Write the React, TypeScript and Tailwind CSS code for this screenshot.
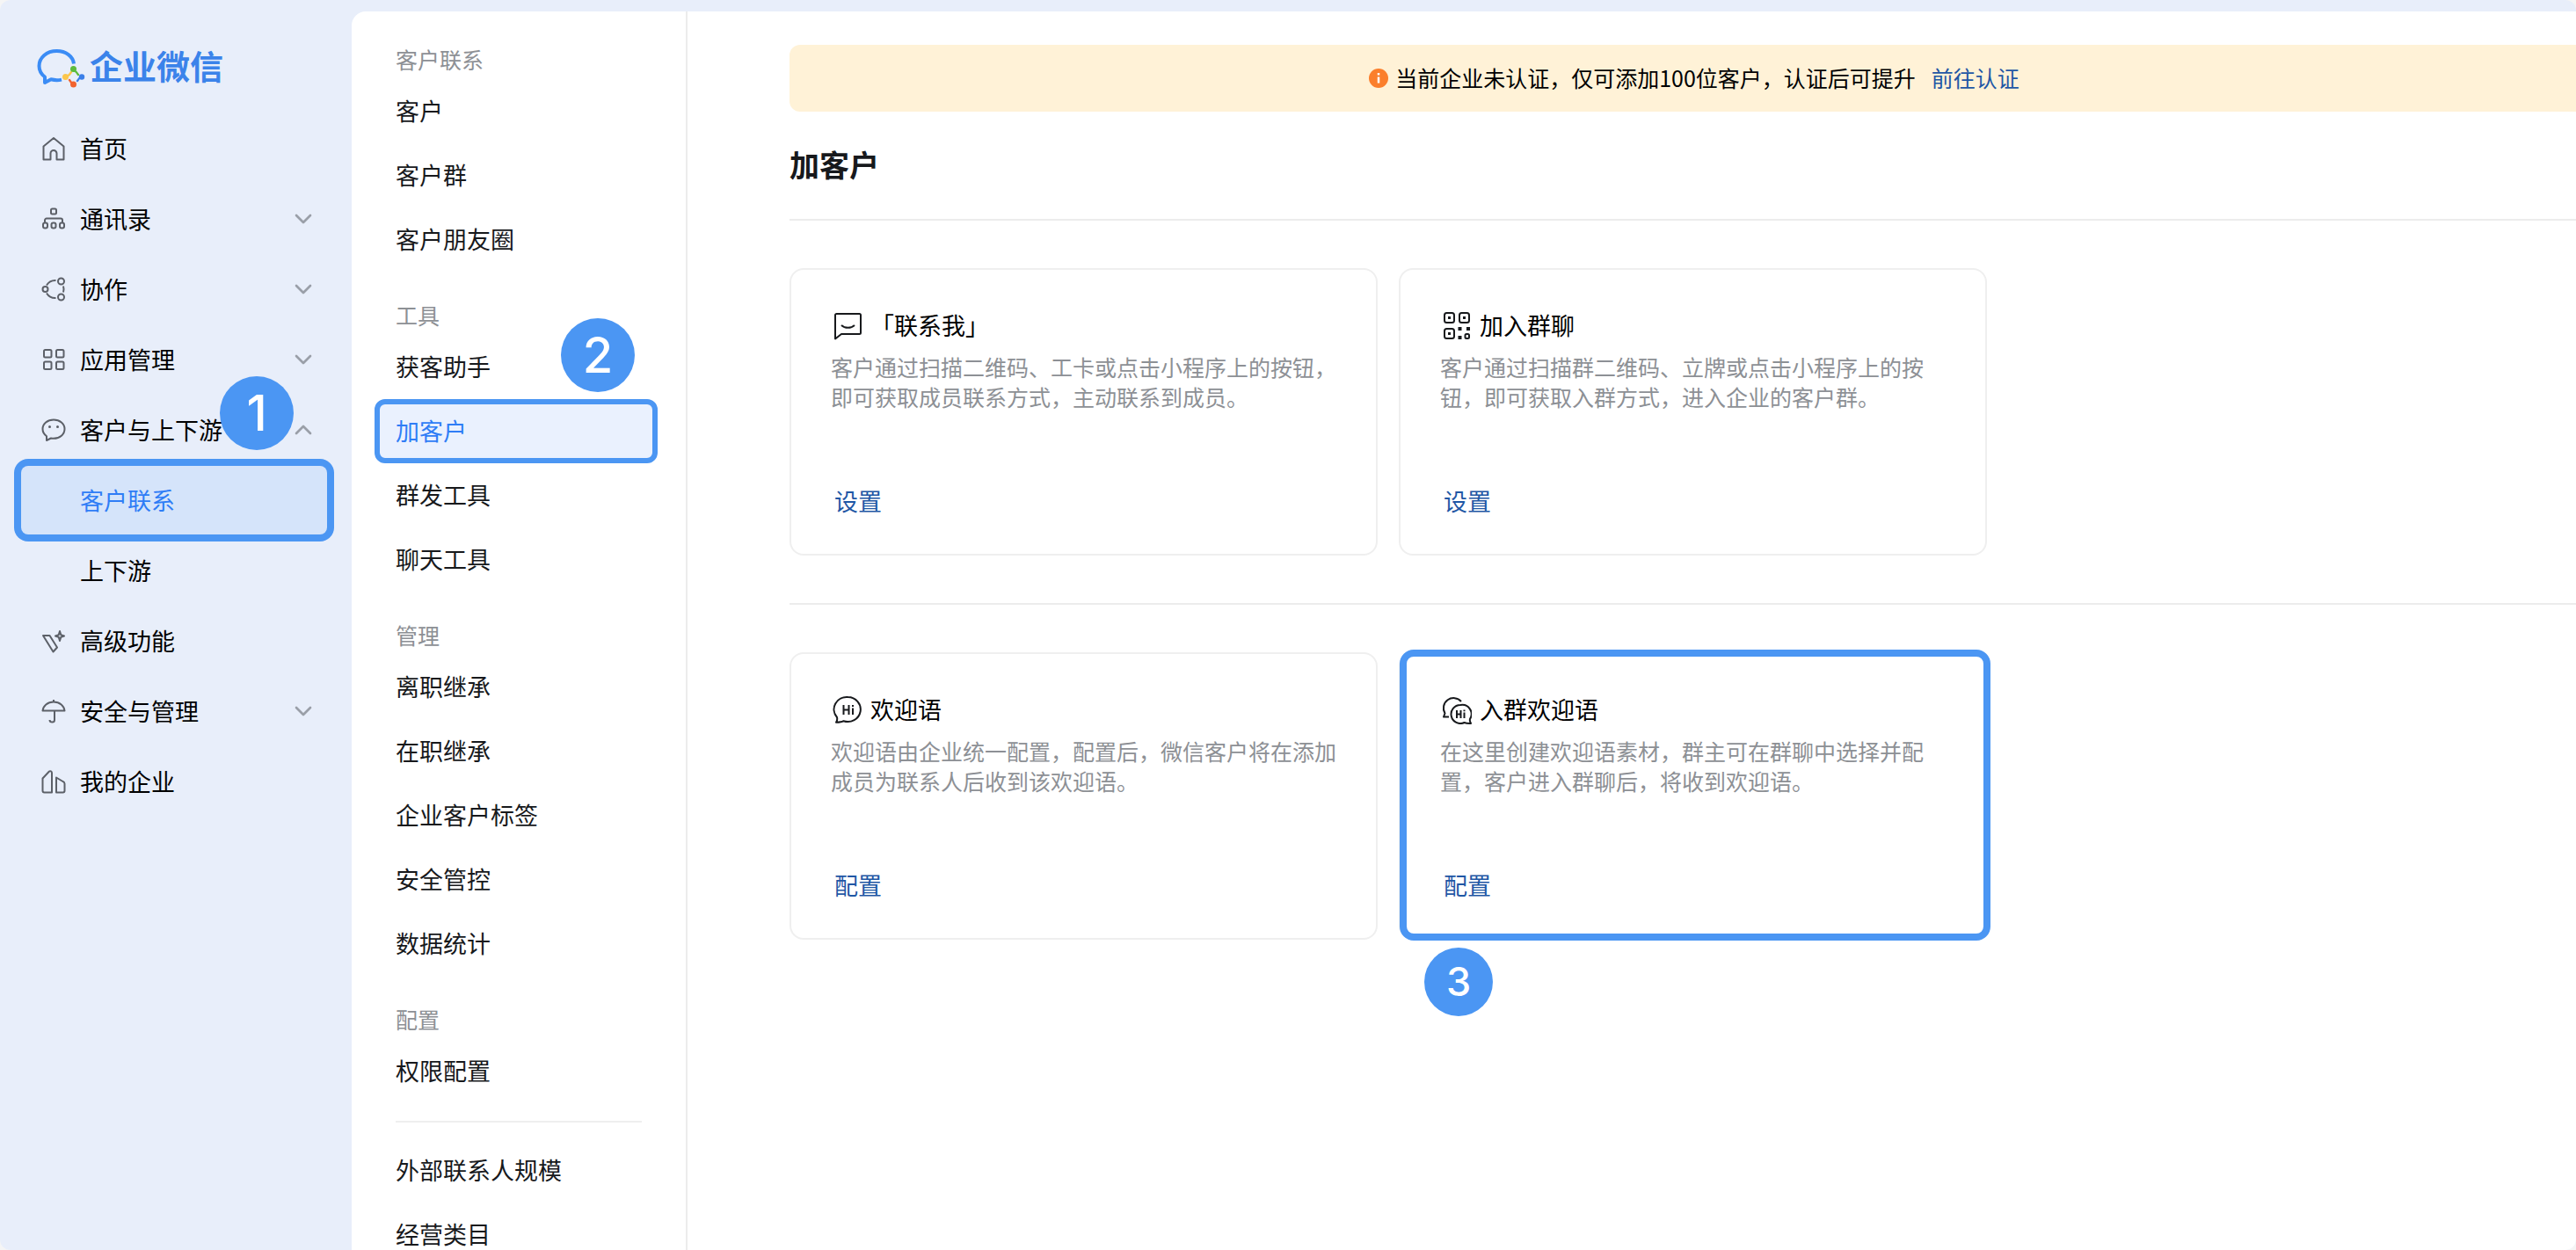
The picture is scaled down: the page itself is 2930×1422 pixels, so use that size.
import React from 'react';
import { ChevronDown, ChevronUp } from 'lucide-react';

interface MainNavItem {
  label: string;
  icon?: React.FC;
  arrow?: 'up' | 'down';
  active?: boolean;
}

interface NavSection {
  title: string;
  items: string[];
}

interface ToolCard {
  title: string;
  description: string;
  action: string;
  icon: React.FC;
  highlighted?: boolean;
}

const NavIcon = ({ children }: { children: React.ReactNode }) => (
  <svg
    viewBox="0 0 28 28"
    className="h-7 w-7 shrink-0"
    fill="none"
    stroke="#5c6068"
    strokeWidth="2"
    strokeLinejoin="round"
    aria-hidden="true"
  >
    {children}
  </svg>
);

const HomeIcon = () => (
  <NavIcon>
    <path d="M2.500 11.500 14 2l11.500 9.500V26.500h-8V19.500a3.500 3.500 0 0 0-7 0v7h-8z" />
  </NavIcon>
);

const ContactsIcon = () => (
  <NavIcon>
    <rect x="11" y="2.500" width="6" height="6" rx="1.500" />
    <path d="M4 18v-2.500a2 2 0 0 1 2-2h16a2 2 0 0 1 2 2V18" />
    <rect x="2" y="18.500" width="5" height="6" rx="2" />
    <rect x="11.500" y="18.500" width="5" height="6" rx="2" />
    <rect x="21" y="18.500" width="5" height="6" rx="2" />
  </NavIcon>
);

const CollaborationIcon = () => (
  <NavIcon>
    <circle cx="4.500" cy="14" r="3" />
    <circle cx="22.500" cy="5" r="3.500" />
    <circle cx="22.500" cy="23" r="3.500" />
    <path d="M6 9.500A11.500 11.500 0 0 1 16.500 4M6 18.500A11.500 11.500 0 0 0 16.500 24M25 10.500a12 12 0 0 1 0 7" />
  </NavIcon>
);

const AppsIcon = () => (
  <NavIcon>
    <rect x="3" y="3" width="8.500" height="8.500" rx="1.500" />
    <rect x="17" y="3" width="8.500" height="8.500" rx="1.500" />
    <rect x="3" y="16.500" width="8.500" height="8.500" rx="1.500" />
    <rect x="17" y="16.500" width="8.500" height="8.500" rx="1.500" />
  </NavIcon>
);

const CustomerIcon = () => (
  <NavIcon>
    <path d="M14 2.500C7 2.500 1.500 7.200 1.500 13c0 3.500 2 6.400 4.500 8.200V26l5-2.500c1 .2 2 .3 3 .3 7 0 12.500-4.700 12.500-10.800S21 2.500 14 2.500z" />
    <circle cx="9.500" cy="10.500" r="1.500" fill="#5c6068" stroke="none" />
    <circle cx="18.500" cy="10.500" r="1.500" fill="#5c6068" stroke="none" />
  </NavIcon>
);

const AdvancedIcon = () => (
  <NavIcon>
    <path d="M2 8h7.500L18 21.500l-4.500 5z" />
    <path d="M21 3l1.300 4.200L26 8.500l-3.700 1.300L21 14l-1.300-4.200L16 8.500l3.700-1.300z" />
  </NavIcon>
);

const SecurityIcon = () => (
  <NavIcon>
    <path d="M1.500 13.500C2 8 7 3.500 14 3.500S26 8 26.500 13.500z" />
    <path d="M14 1v2.500M15 13.500V24a2.500 2.500 0 0 1-2.500 2.500c-1.800 0-3-1-3-2.500" />
  </NavIcon>
);

const CompanyIcon = () => (
  <NavIcon>
    <path d="M1.500 10.500 9 2.500a2 2 0 0 1 3 1.500v22.500H3.500a2 2 0 0 1-2-2z" />
    <path d="M17 9.500l7.500 4.500a3 3 0 0 1 2 2.500v8a2 2 0 0 1-2 2H17z" />
  </NavIcon>
);

const CardIcon = ({ children }: { children: React.ReactNode }) => (
  <svg
    viewBox="0 0 34 34"
    className="h-[34px] w-[34px] shrink-0"
    fill="none"
    stroke="#17191c"
    strokeWidth="2"
    strokeLinejoin="round"
    aria-hidden="true"
  >
    {children}
  </svg>
);

const ContactMeIcon = () => (
  <CardIcon>
    <path d="M3 32.500V5.500A1.500 1.500 0 0 1 4.500 4h26A1.500 1.500 0 0 1 32 5.500v20a1.500 1.500 0 0 1-1.500 1.500H10z" />
    <path d="M10 17c4 3.800 11 3.800 15 0" />
  </CardIcon>
);

const QrIcon = () => (
  <CardIcon>
    <rect x="3" y="3" width="11" height="11" rx="2.500" />
    <rect x="20" y="3" width="11" height="11" rx="2.500" />
    <rect x="3" y="21" width="11" height="11" rx="2.500" />
    <path d="M7 8.500h3M24 8.500h3M7 26.500h3" strokeWidth="3" />
    <path d="M18.500 21h4M28 21h4M18.500 31h4" strokeWidth="4" />
    <rect x="26.500" y="27" width="4.500" height="5" rx="1.500" />
  </CardIcon>
);

const WelcomeIcon = () => (
  <CardIcon>
    <path d="M17.500 3a14.500 14 0 1 1-5 27.200c-2 1.300-5 1.600-8.500 1.600 1.200-1.800 1.500-3.800 1-5.800A14.500 14 0 0 1 17.500 3z" />
    <path d="M12.500 12v11M18.500 12v11M12.500 17.500h6M23 15.500V23M23 12v2" />
  </CardIcon>
);

const GroupWelcomeIcon = () => (
  <CardIcon>
    <path d="M22 8A11.500 11.500 0 0 0 3.500 21.500L2 25.500h6" />
    <path d="M21 12a10.500 10.500 0 1 0 4.500 20c2 .8 4.500 1 7.500.9-1-1.600-1.500-3.200-1-5A10.500 10.500 0 0 0 21 12z" />
    <path d="M17 18v9M21.500 18v9M17 22.500h4.500M25.500 20.500V27M25.500 17.500v1.800" />
  </CardIcon>
);

const Logo = () => (
  <svg viewBox="0 0 56 48" className="h-12 w-14 shrink-0 overflow-visible" aria-hidden="true">
    <path
      d="M42 22.500C41 14 33 8 22.500 8 11 8 2.500 15.500 2.500 25c0 5 2.500 9.500 6.500 12.500V44l7-3.700c4 1 8 1.200 12 .3"
      fill="none"
      stroke="#3b8cf5"
      strokeWidth="4"
      strokeLinejoin="round"
    />
    <g fill="none" strokeWidth="2.500" strokeLinecap="round">
      <path d="M42 30c2 1 4 3 5 5" stroke="#5dbb3c" />
      <path d="M51 37c-2 1-4 3-5 5" stroke="#3b7fe8" />
      <path d="M42 46c-2-1-4-3-5-5" stroke="#f2632f" />
      <path d="M34 37c2-1 4-3 5-5" stroke="#fbc64c" />
    </g>
    <circle cx="41.500" cy="28.500" r="3.500" fill="#5dbb3c" />
    <circle cx="51" cy="37.500" r="3.200" fill="#3b7fe8" />
    <circle cx="41.500" cy="46" r="3.500" fill="#f2632f" />
    <circle cx="32.500" cy="37.500" r="3.500" fill="#fbc64c" />
  </svg>
);

const mainNav: MainNavItem[] = [
  { label: '首页', icon: HomeIcon },
  { label: '通讯录', icon: ContactsIcon, arrow: 'down' },
  { label: '协作', icon: CollaborationIcon, arrow: 'down' },
  { label: '应用管理', icon: AppsIcon, arrow: 'down' },
  { label: '客户与上下游', icon: CustomerIcon, arrow: 'up' },
  { label: '客户联系', active: true },
  { label: '上下游' },
  { label: '高级功能', icon: AdvancedIcon },
  { label: '安全与管理', icon: SecurityIcon, arrow: 'down' },
  { label: '我的企业', icon: CompanyIcon },
];

const sections: NavSection[] = [
  { title: '客户联系', items: ['客户', '客户群', '客户朋友圈'] },
  { title: '工具', items: ['获客助手', '加客户', '群发工具', '聊天工具'] },
  { title: '管理', items: ['离职继承', '在职继承', '企业客户标签', '安全管控', '数据统计'] },
  { title: '配置', items: ['权限配置'] },
];

const extraItems = ['外部联系人规模', '经营类目'];

const cardRows: ToolCard[][] = [
  [
    {
      title: '「联系我」',
      description: '客户通过扫描二维码、工卡或点击小程序上的按钮，即可获取成员联系方式，主动联系到成员。',
      action: '设置',
      icon: ContactMeIcon,
    },
    {
      title: '加入群聊',
      description: '客户通过扫描群二维码、立牌或点击小程序上的按钮，即可获取入群方式，进入企业的客户群。',
      action: '设置',
      icon: QrIcon,
    },
  ],
  [
    {
      title: '欢迎语',
      description: '欢迎语由企业统一配置，配置后，微信客户将在添加成员为联系人后收到该欢迎语。',
      action: '配置',
      icon: WelcomeIcon,
    },
    {
      title: '入群欢迎语',
      description: '在这里创建欢迎语素材，群主可在群聊中选择并配置，客户进入群聊后，将收到欢迎语。',
      action: '配置',
      icon: GroupWelcomeIcon,
      highlighted: true,
    },
  ],
];

const stepBase =
  'absolute flex items-center justify-center rounded-full bg-[#4b96f3] font-["Inter",sans-serif] font-medium text-white';

const MainSidebar = () => (
  <aside className="w-[400px] shrink-0 pt-[50px]">
    <a href="#home" className="flex h-12 items-center gap-1 pl-[42px]">
      <Logo />
      <span className="text-[38px] leading-none font-bold text-[#3b83ea]">企业微信</span>
    </a>
    <nav className="mt-8 pr-7 pl-6 text-[27px] text-black">
      {mainNav.map(({ label, icon: Icon, arrow, active }) => {
        if (active) {
          return (
            <a
              key={label}
              href="#contact"
              className="relative mb-0.5 flex h-[78px] items-center rounded-lg bg-[#d5e4fa] pl-[67px] text-[#2f7df6] ring-8 ring-[#4b96f3]"
            >
              {label}
              <span className={`${stepBase} -top-[102px] right-[38px] h-21 w-21 text-[56px]`}>1</span>
            </a>
          );
        }
        return (
          <a key={label} href="#nav" className="flex h-20 items-center pr-[11px] pb-0.5 pl-[23px]">
            <span className="flex w-11 shrink-0">{Icon && <Icon />}</span>
            <span className="flex-1">{label}</span>
            {arrow === 'down' && <ChevronDown size={32} strokeWidth={2} className="text-[#9a9fa8]" />}
            {arrow === 'up' && <ChevronUp size={32} strokeWidth={2} className="text-[#9a9fa8]" />}
          </a>
        );
      })}
    </nav>
  </aside>
);

const SubNavLink = ({ label }: { label: string }) => {
  if (label === '加客户') {
    return (
      <a
        href="#add"
        className="relative flex h-[73px] items-center rounded-xl border-6 border-[#4b96f3] bg-[#eaf1fe] pl-[18px] text-[#2f7df6]"
      >
        {label}
        <span className={`${stepBase} -top-[98px] right-5 h-21 w-21 text-[56px]`}>2</span>
      </a>
    );
  }
  return (
    <a href="#sub" className="flex h-[73px] items-center pl-6">
      {label}
    </a>
  );
};

const SubSidebar = () => (
  <nav className="w-[382px] shrink-0 border-r-2 border-[#ececec] pt-[33px] pr-8 pl-[26px] text-[27px] text-[#17191c]">
    <div className="flex flex-col gap-7">
      {sections.map((section) => (
        <section key={section.title}>
          <h2 className="flex h-11 items-center pl-6 text-[25px] text-[#8d9095]">{section.title}</h2>
          {section.items.map((item) => (
            <SubNavLink key={item} label={item} />
          ))}
        </section>
      ))}
    </div>
    <hr className="mt-5 mr-[18px] mb-[18px] ml-6 border-t-2 border-[#efefef]" />
    {extraItems.map((item) => (
      <SubNavLink key={item} label={item} />
    ))}
  </nav>
);

const Card = ({ title, description, action, icon: Icon, highlighted }: ToolCard) => (
  <article className="relative h-[327px] w-[669px] rounded-2xl border-2 border-[#efefef] pt-[43px] pr-[35px] pl-[45px]">
    <h2 className="flex h-10 items-center gap-[9px] pl-0.5 text-[27px] text-black">
      <Icon />
      {title}
    </h2>
    <p className="mt-2.5 text-[25px] leading-[34px] text-[#8d9095]">{description}</p>
    <a href="#action" className="mt-[82px] ml-1 inline-flex h-10 items-center text-[27px] text-[#1f57a5]">
      {action}
    </a>
    {highlighted && (
      <>
        <div className="pointer-events-none absolute -top-[5px] -right-[6px] -bottom-[3px] -left-px rounded-2xl border-8 border-[#4b96f3]" />
        <span className={`${stepBase} -bottom-[89px] left-[27px] h-[78px] w-[78px] text-[45px]`}>3</span>
      </>
    )}
  </article>
);

const Divider = () => <hr className="-mr-[26px] border-t-2 border-[#ececec]" />;

export default function App() {
  return (
    <div className='h-screen overflow-hidden bg-[#f5f5f5] font-["Noto_Sans_CJK_SC",sans-serif]'>
      <div className="flex h-full overflow-hidden rounded-xl bg-[#e8eefa]">
        <MainSidebar />
        <div className="mt-[13px] flex min-w-0 flex-1 overflow-hidden rounded-tl-2xl bg-white">
          <SubSidebar />
          <main className="min-w-0 flex-1 overflow-hidden pt-[38px] pl-[116px]">
            {/* the content column is slightly wider than the viewport */}
            <div role="alert" className="-mr-[26px] flex h-[76px] items-center justify-center rounded-xl bg-[#fff2d7] text-[25px] text-black">
              <svg viewBox="0 0 22 22" className="mr-2 h-[22px] w-[22px]" aria-hidden="true">
                <circle cx="11" cy="11" r="11" fill="#fb7f2c" />
                <path d="M11 9.500v7M11 5v2.500" stroke="#fff" strokeWidth="2.500" />
              </svg>
              当前企业未认证，仅可添加100位客户，认证后可提升
              <a href="#verify" className="ml-[18px] text-[#1f57a5]">
                前往认证
              </a>
            </div>
            <h1 className="flex h-[122px] items-center pb-1 text-[34px] font-bold text-[#17191c]">加客户</h1>
            {cardRows.map((row) => (
              <section key={row[0].title}>
                <Divider />
                <div className="flex gap-6 py-[54px]">
                  {row.map((card) => (
                    <Card key={card.title} {...card} />
                  ))}
                </div>
              </section>
            ))}
          </main>
        </div>
      </div>
    </div>
  );
}
